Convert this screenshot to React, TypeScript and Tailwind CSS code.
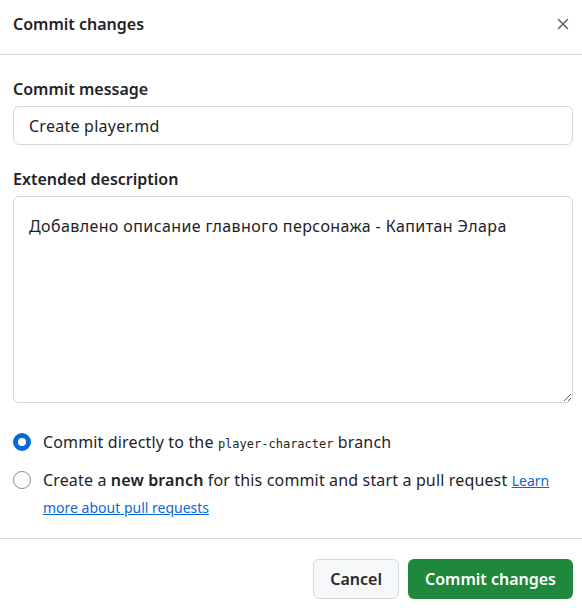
import { X } from "lucide-react"

function Radio({ checked }: { checked?: boolean }) {
  return checked ? (
    <span className="mt-[4px] h-[18px] w-[18px] shrink-0 rounded-full border-[5px] border-[#0969da] bg-white" />
  ) : (
    <span className="mt-[4px] h-[18px] w-[18px] shrink-0 rounded-full border border-[#818b98] bg-white" />
  )
}

export default function App() {
  return (
    <div
      className="flex h-[608px] w-[582px] flex-col bg-white text-[#1f2328]"
      style={{ fontFamily: '"Noto Sans", "Segoe UI", sans-serif' }}
    >
      {/* Header */}
      <div className="flex h-[55px] shrink-0 items-start justify-between border-b border-[#d1d9e0] pl-[13px] pr-[7px] pt-[12px]">
        <h1 className="text-[16px] font-semibold leading-[24px]">Commit changes</h1>
        <button className="flex h-6 w-6 items-center justify-center text-[#59636e]">
          <X className="h-[18px] w-[18px]" strokeWidth={2} />
        </button>
      </div>

      {/* Body */}
      <div className="flex flex-1 flex-col pl-[13px] pr-[9px] pt-[20px]">
        <label className="mb-[3px] text-[16px] font-semibold leading-[28px]">Commit message</label>
        <input
          defaultValue="Create player.md"
          className="h-[39px] w-full rounded-[6px] border border-[#d1d9e0] px-[15px] text-[16px] tracking-[0.25px] outline-none"
        />

        <label className="mb-[3px] mt-[20px] text-[16px] font-semibold leading-[28px]">
          Extended description
        </label>
        <textarea
          defaultValue="Добавлено описание главного персонажа - Капитан Элара"
          className="h-[207px] w-full resize-y rounded-[6px] border border-[#d1d9e0] px-[15px] pt-[17px] text-[16px] leading-[24px] tracking-[0.4px] outline-none"
        />

        <div className="mt-[26px] flex flex-col gap-[10px] text-[16px] tracking-[0.15px]">
          <div className="flex items-start gap-[12px] leading-[26px]">
            <Radio checked />
            <p>
              Commit directly to the{" "}
              <code className="text-[12px] tracking-normal" style={{ fontFamily: '"DejaVu Sans Mono", monospace' }}>
                player-character
              </code>{" "}
              branch
            </p>
          </div>
          <div className="flex items-start gap-[12px] leading-[27px]">
            <Radio />
            <p>
              Create a <b className="font-semibold">new branch</b> for this commit and start a pull request{" "}
              <a href="#" className="text-[14px] tracking-normal text-[#0969da] underline">
                Learn
              </a>{" "}
              <a href="#" className="text-[14px] tracking-normal text-[#0969da] underline">
                more about pull requests
              </a>
            </p>
          </div>
        </div>
      </div>

      {/* Footer */}
      <div className="flex h-[70px] shrink-0 items-start justify-end gap-[9px] border-t border-[#d1d9e0] pr-[9px] pt-[20px]">
        <button className="h-[40px] rounded-[6px] border border-[#d1d9e0] bg-[#f6f8fa] px-[16px] text-[16px] font-semibold text-[#25292e]">
          Cancel
        </button>
        <button className="h-[40px] rounded-[6px] bg-[#1f883d] px-[17px] text-[16px] font-semibold text-white">
          Commit changes
        </button>
      </div>
    </div>
  )
}
